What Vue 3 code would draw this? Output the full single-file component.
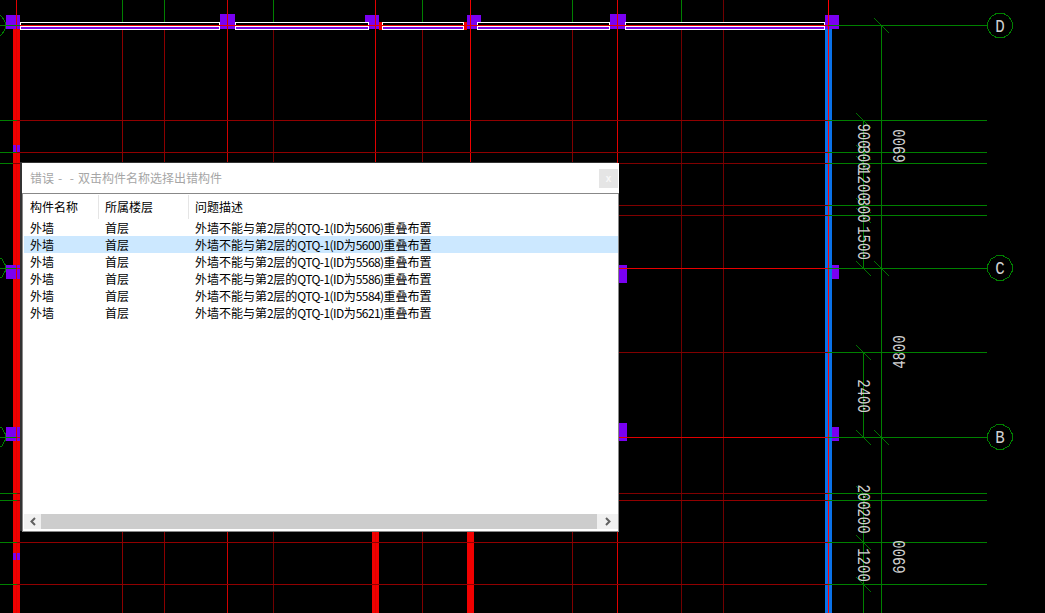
<script setup>
const title = '错误 -  - 双击构件名称选择出错构件'

const rows = [
  { id: 5606 },
  { id: 5600, selected: true },
  { id: 5568 },
  { id: 5586 },
  { id: 5584 },
  { id: 5621 },
]

// grid lines of the drawing
const gridX = [
  { x: 122, top: '#008000', color: '#8b0000' },
  { x: 164, top: '#008000', color: '#8b0000' },
  { x: 227, top: '#d00000', color: '#d00000' },
  { x: 273, top: '#008000', color: '#700000' },
  { x: 375, top: '#e00000', color: '#e00000' },
  { x: 422, top: '#008000', color: '#800000' },
  { x: 470, top: '#f00000', color: '#f00000' },
  { x: 572, top: '#008000', color: '#800000' },
  { x: 617, top: '#e00000', color: '#e00000' },
  { x: 681, top: '#008000', color: '#700000' },
  { x: 723, top: '#700000', color: '#700000' },
]
const gridY = [
  { y: 120, color: '#900000', left: 17 },
  { y: 152, color: '#900000', left: 17 },
  { y: 163, color: '#800000', left: 13 },
  { y: 205, color: '#800000' },
  { y: 215, color: '#800000' },
  { y: 268, color: '#e80000', left: 17 },
  { y: 352, color: '#800000' },
  { y: 437, color: '#e00000', left: 17 },
  { y: 493, color: '#800000', left: 17 },
  { y: 500, color: '#900000', left: 17 },
  { y: 542, color: '#900000', left: 17 },
  { y: 584, color: '#900000', left: 17 },
]

const columns = [
  [6, 15, 14, 14],
  [220, 14, 15, 15],
  [365, 15, 14, 14],
  [467, 15, 14, 14],
  [610, 14, 16, 15],
  [825, 15, 14, 14],
  [6, 265, 14, 14],
  [619, 265, 8, 18],
  [832, 265, 7, 14],
  [6, 427, 14, 14],
  [619, 423, 8, 18],
  [832, 427, 7, 14],
  [13, 145, 7, 7],
  [13, 553, 7, 7],
]
const wallStrips = [
  [20, 220],
  [235, 369],
  [382, 464],
  [477, 610],
  [625, 825],
]

const ticksInner = [120, 152, 163, 205, 215, 268, 352, 437, 493, 500, 542, 584]
const ticksOuter = [25, 268, 437]

const dimsInner = [
  { text: '900', y: 136 },
  { text: '300', y: 158 },
  { text: '1200', y: 184 },
  { text: '300', y: 210 },
  { text: '1500', y: 243 },
  { text: '2400', y: 396 },
  { text: '200', y: 497 },
  { text: '200', y: 521 },
  { text: '1200', y: 565 },
]
const dimsOuter = [
  { text: '6900', y: 146 },
  { text: '4800', y: 352 },
  { text: '6900', y: 557 },
]

function bubble(cx, cy) {
  const pts = []
  for (let i = 0; i < 12; i++) {
    const a = (i / 12) * Math.PI * 2 + 0.26
    pts.push(`${(cx + Math.cos(a) * 12.6).toFixed(1)},${(cy + Math.sin(a) * 12.6).toFixed(1)}`)
  }
  return pts.join(' ')
}
const axes = [
  { label: 'D', y: 25.5 },
  { label: 'C', y: 268 },
  { label: 'B', y: 437 },
]
</script>

<template>
  <div class="screen">
    <svg class="drawing" width="1045" height="613" viewBox="0 0 1045 613">
      <!-- thick walls -->
      <rect x="13" y="29" width="7" height="584" fill="#f00000" />
      <rect x="372" y="500" width="7" height="113" fill="#f00000" />
      <rect x="467" y="500" width="7" height="113" fill="#f00000" />
      <rect x="825" y="29" width="7" height="584" fill="#0a72e8" />

      <g v-for="c in columns" :key="c.join()">
        <rect :x="c[0]" :y="c[1]" :width="c[2]" :height="c[3]" fill="#7a00f2" />
      </g>
      <rect x="379" y="22" width="3" height="8" fill="#f00000" />
      <rect x="464" y="22" width="3" height="8" fill="#f00000" />

      <g class="crisp">
        <line x1="16.5" y1="0" x2="16.5" y2="613" stroke="#e00000" />
        <g v-for="g in gridX" :key="g.x">
          <line :x1="g.x + 0.5" y1="0" :x2="g.x + 0.5" y2="22" :stroke="g.top" />
          <line :x1="g.x + 0.5" y1="22" :x2="g.x + 0.5" y2="613" :stroke="g.color" />
        </g>
        <line x1="828.5" y1="0" x2="828.5" y2="613" stroke="#ff0000" />

        <g v-for="g in gridY" :key="g.y">
          <line v-if="g.left" x1="0" :y1="g.y + 0.5" :x2="g.left" :y2="g.y + 0.5" stroke="#008000" />
          <line :x1="g.left || 20" :y1="g.y + 0.5" x2="828" :y2="g.y + 0.5" :stroke="g.color" />
          <line x1="828" :y1="g.y + 0.5" x2="987" :y2="g.y + 0.5" stroke="#008000" />
        </g>

        <!-- wall along axis D -->
        <g v-for="s in wallStrips" :key="s[0]">
          <rect :x="s[0] + 0.5" y="22.5" :width="s[1] - s[0] - 1" height="7" fill="#000" stroke="#fff" />
          <line :x1="s[0] + 1" y1="26.5" :x2="s[1] - 1" y2="26.5" stroke="#fff" />
          <rect :x="s[0] + 1" y="27" :width="s[1] - s[0] - 2" height="2" fill="#7a08e0" />
        </g>
        <line x1="0" y1="25.5" x2="20" y2="25.5" stroke="#008000" />
        <line x1="20" y1="25.5" x2="828" y2="25.5" stroke="#e80000" />
        <line x1="828" y1="25.5" x2="987" y2="25.5" stroke="#008000" />

        <!-- dimension lines -->
        <line x1="881.5" y1="25" x2="881.5" y2="613" stroke="#008000" />
        <line x1="863.5" y1="120" x2="863.5" y2="268" stroke="#008000" />
        <line x1="863.5" y1="352" x2="863.5" y2="437" stroke="#008000" />
        <line x1="863.5" y1="493" x2="863.5" y2="613" stroke="#008000" />
      </g>

      <g stroke="#008000" stroke-width="0.9">
        <line v-for="y in ticksInner" :key="y" x1="856" :y1="y - 7" x2="871" :y2="y + 8" />
        <line v-for="y in ticksOuter" :key="y" x1="874" :y1="y - 7" x2="889" :y2="y + 8" />
      </g>

      <g class="cad-text">
        <text
          v-for="d in dimsInner"
          :key="d.text + d.y"
          :transform="`translate(858 ${d.y}) rotate(90)`"
          text-anchor="middle"
          :textLength="d.text.length * 8.4"
          lengthAdjust="spacingAndGlyphs"
        >{{ d.text }}</text>
        <text
          v-for="d in dimsOuter"
          :key="d.text + d.y"
          :transform="`translate(905 ${d.y}) rotate(-90)`"
          text-anchor="middle"
          :textLength="d.text.length * 8.4"
          lengthAdjust="spacingAndGlyphs"
        >{{ d.text }}</text>
      </g>

      <!-- axis bubbles, the left ones are cut by the window edge -->
      <g v-for="a in axes" :key="a.label">
        <polygon class="crisp" :points="bubble(1000, a.y)" fill="#000" stroke="#008000" />
        <polygon class="crisp" :points="bubble(-7, a.y)" fill="none" stroke="#008000" />
        <text
          class="axis-label"
          x="1000"
          :y="a.y + 6"
          text-anchor="middle"
          textLength="9.5"
          lengthAdjust="spacingAndGlyphs"
        >{{ a.label }}</text>
      </g>
    </svg>

    <section class="dialog">
      <header class="titlebar">
        <span class="title">{{ title }}</span>
        <button class="close" type="button">x</button>
      </header>
      <div class="body">
        <div class="thead">
          <span>构件名称</span>
          <span>所属楼层</span>
          <span>问题描述</span>
        </div>
        <div class="list">
          <div v-for="r in rows" :key="r.id" class="row" :class="{ selected: r.selected }">
            <span>外墙</span>
            <span>首层</span>
            <span>外墙不能与第<i>2</i>层的<i>QTQ-1(ID</i>为<i>{{ r.id }})</i>重叠布置</span>
          </div>
        </div>
        <div class="scrollbar">
          <div class="arrow">
            <svg width="8" height="9" viewBox="0 0 8 9"><path d="M6 1 2.5 4.5 6 8" fill="none" stroke="#606060" stroke-width="2" /></svg>
          </div>
          <div class="track"></div>
          <div class="arrow">
            <svg width="8" height="9" viewBox="0 0 8 9"><path d="M2 1 5.5 4.5 2 8" fill="none" stroke="#606060" stroke-width="2" /></svg>
          </div>
        </div>
      </div>
    </section>
  </div>
</template>

<style scoped>
.screen {
  position: relative;
  width: 1045px;
  height: 613px;
  overflow: hidden;
  background: #000;
  font-family: "Noto Sans CJK SC", "Liberation Sans", sans-serif;
}

.drawing {
  display: block;
}

.crisp {
  shape-rendering: crispEdges;
}

.cad-text text {
  font-family: "Liberation Mono", monospace;
  font-size: 18px;
  fill: #cfcfcf;
}

.axis-label {
  font-family: "Liberation Mono", monospace;
  font-size: 18px;
  fill: #d0d0d0;
}

.dialog {
  position: absolute;
  left: 22px;
  top: 163px;
  width: 597px;
  height: 369px;
  display: flex;
  flex-direction: column;
  background: #fff;
  box-shadow: -2px -1px 0 #333;
  color: #000;
  font-size: 12px;
}

.titlebar {
  height: 30px;
  flex: none;
  display: flex;
  align-items: center;
  justify-content: space-between;
  padding-left: 8px;
  padding-right: 1px;
  box-sizing: border-box;
}

.title {
  color: #a6a6a6;
  white-space: pre;
  word-spacing: 1.2px;
  line-height: 28px;
}

.close {
  width: 19px;
  height: 19px;
  margin: 0;
  padding: 0;
  border: 0;
  background: #e5e5e5;
  color: #f8f8f8;
  font: bold 10px/19px "Liberation Sans", sans-serif;
}

.body {
  flex: 1;
  min-height: 0;
  display: flex;
  flex-direction: column;
  border: 1px solid #888;
  padding: 0 0 2px 1px;
}

.thead,
.row {
  display: grid;
  grid-template-columns: 75px 90px 1fr;
}

.thead {
  height: 25px;
  flex: none;
  align-items: center;
  padding-top: 1px;
  box-sizing: border-box;
}

.thead span {
  height: 24px;
  line-height: 23px;
  padding-left: 6px;
  border-right: 1px solid #e5e5e5;
}

.thead span:last-child {
  border-right: 0;
}

.list {
  flex: 1;
  min-height: 0;
}

.row {
  height: 17px;
  line-height: 17px;
  white-space: nowrap;
}

.row span {
  padding-left: 6px;
}

.row i {
  font-style: normal;
  letter-spacing: -0.56px;
}

.row.selected {
  background: #cce8ff;
}

.scrollbar {
  height: 15px;
  flex: none;
  display: flex;
  background: #cdcdcd;
}

.arrow {
  width: 17px;
  flex: none;
  display: flex;
  align-items: center;
  justify-content: center;
  background: #f0f0f0;
}

.track {
  flex: 1;
}

.arrow:last-child {
  width: 21px;
}
</style>

<style>
html,
body {
  background: #000;
  overflow: hidden;
}
</style>
